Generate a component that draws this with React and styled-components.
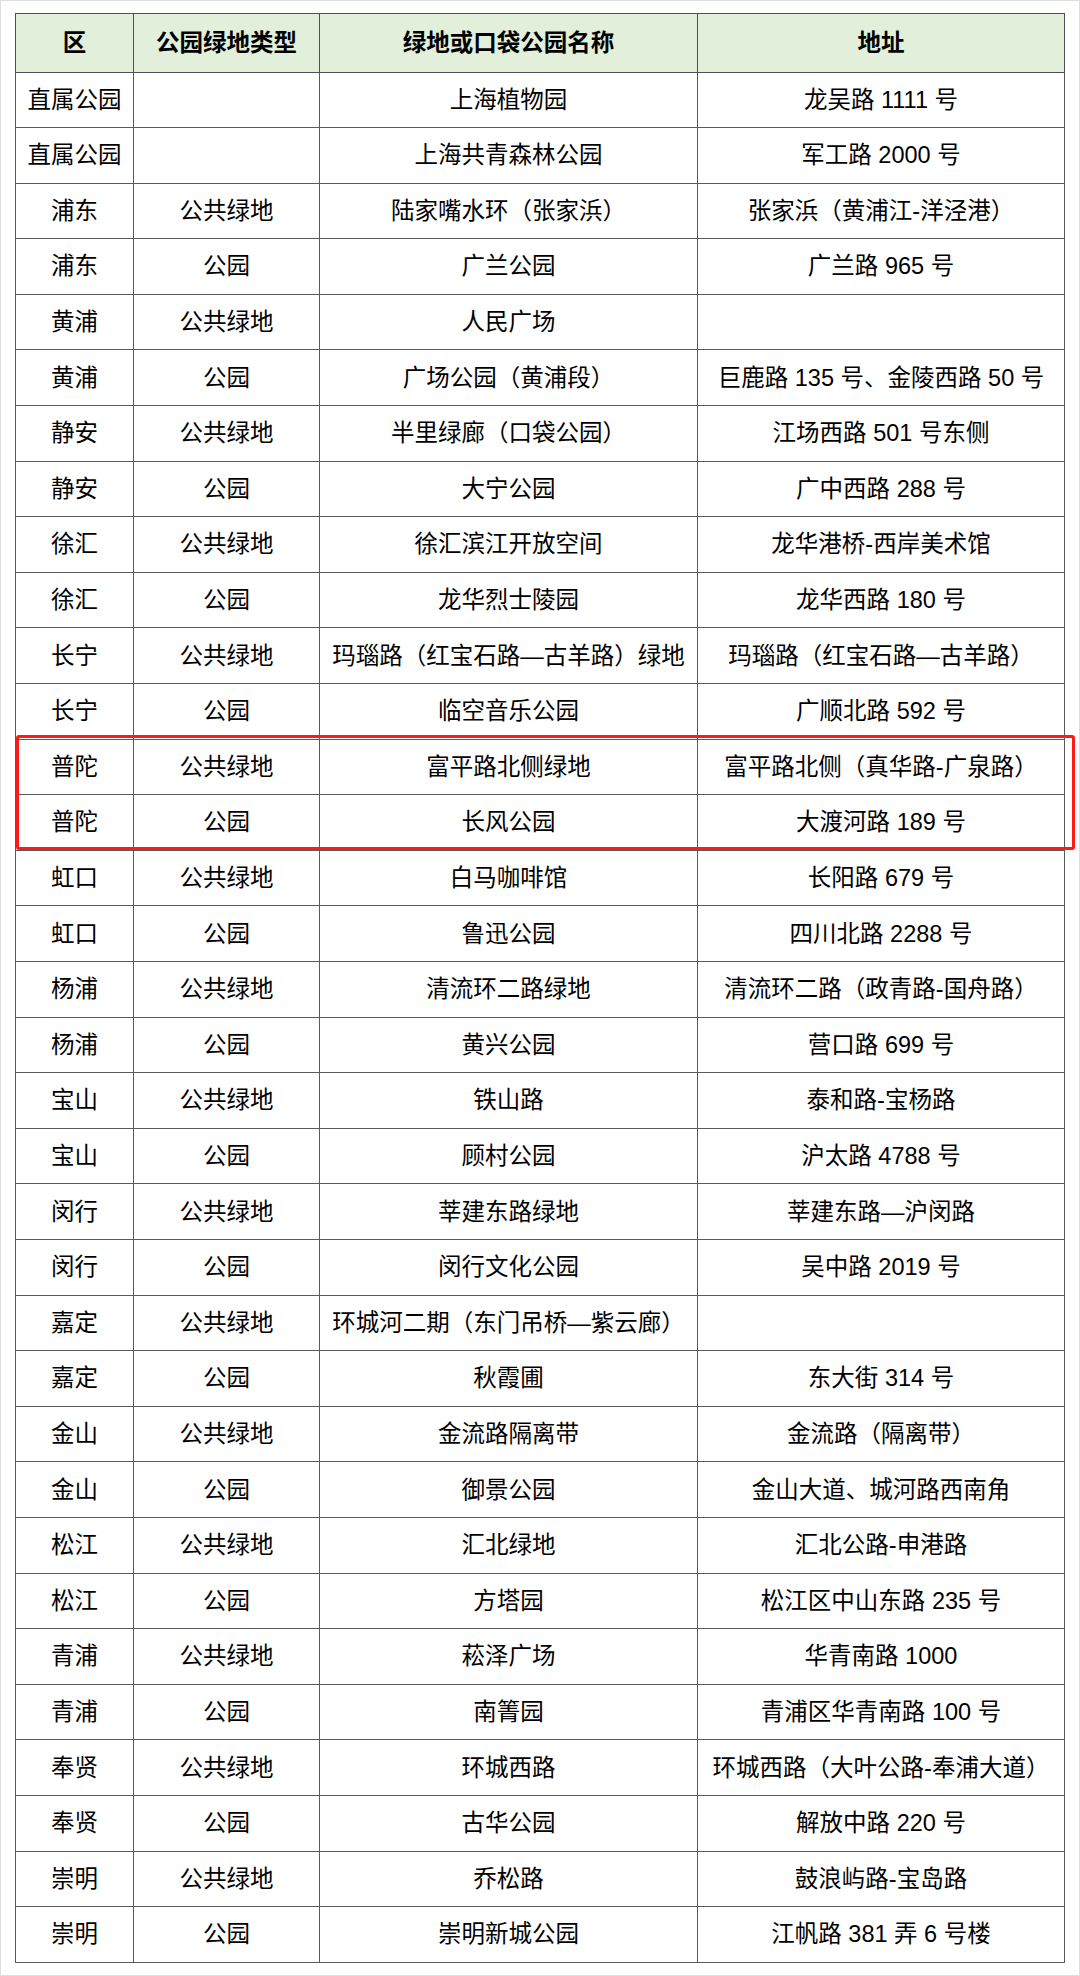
import React from 'react';
import styled, { createGlobalStyle } from 'styled-components';

const GlobalStyle = createGlobalStyle`
  html, body {
    margin: 0;
    padding: 0;
    background: #ffffff;
  }
`;

const rows = [
  ['直属公园', '', '上海植物园', '龙吴路 1111 号'],
  ['直属公园', '', '上海共青森林公园', '军工路 2000 号'],
  ['浦东', '公共绿地', '陆家嘴水环（张家浜）', '张家浜（黄浦江-洋泾港）'],
  ['浦东', '公园', '广兰公园', '广兰路 965 号'],
  ['黄浦', '公共绿地', '人民广场', ''],
  ['黄浦', '公园', '广场公园（黄浦段）', '巨鹿路 135 号、金陵西路 50 号'],
  ['静安', '公共绿地', '半里绿廊（口袋公园）', '江场西路 501 号东侧'],
  ['静安', '公园', '大宁公园', '广中西路 288 号'],
  ['徐汇', '公共绿地', '徐汇滨江开放空间', '龙华港桥-西岸美术馆'],
  ['徐汇', '公园', '龙华烈士陵园', '龙华西路 180 号'],
  ['长宁', '公共绿地', '玛瑙路（红宝石路—古羊路）绿地', '玛瑙路（红宝石路—古羊路）'],
  ['长宁', '公园', '临空音乐公园', '广顺北路 592 号'],
  ['普陀', '公共绿地', '富平路北侧绿地', '富平路北侧（真华路-广泉路）'],
  ['普陀', '公园', '长风公园', '大渡河路 189 号'],
  ['虹口', '公共绿地', '白马咖啡馆', '长阳路 679 号'],
  ['虹口', '公园', '鲁迅公园', '四川北路 2288 号'],
  ['杨浦', '公共绿地', '清流环二路绿地', '清流环二路（政青路-国舟路）'],
  ['杨浦', '公园', '黄兴公园', '营口路 699 号'],
  ['宝山', '公共绿地', '铁山路', '泰和路-宝杨路'],
  ['宝山', '公园', '顾村公园', '沪太路 4788 号'],
  ['闵行', '公共绿地', '莘建东路绿地', '莘建东路—沪闵路'],
  ['闵行', '公园', '闵行文化公园', '吴中路 2019 号'],
  ['嘉定', '公共绿地', '环城河二期（东门吊桥—紫云廊）', ''],
  ['嘉定', '公园', '秋霞圃', '东大街 314 号'],
  ['金山', '公共绿地', '金流路隔离带', '金流路（隔离带）'],
  ['金山', '公园', '御景公园', '金山大道、城河路西南角'],
  ['松江', '公共绿地', '汇北绿地', '汇北公路-申港路'],
  ['松江', '公园', '方塔园', '松江区中山东路 235 号'],
  ['青浦', '公共绿地', '菘泽广场', '华青南路 1000'],
  ['青浦', '公园', '南箐园', '青浦区华青南路 100 号'],
  ['奉贤', '公共绿地', '环城西路', '环城西路（大叶公路-奉浦大道）'],
  ['奉贤', '公园', '古华公园', '解放中路 220 号'],
  ['崇明', '公共绿地', '乔松路', '鼓浪屿路-宝岛路'],
  ['崇明', '公园', '崇明新城公园', '江帆路 381 弄 6 号楼'],
];

const columns = ['区', '公园绿地类型', '绿地或口袋公园名称', '地址'];
const widths = [118, 186, 378, 367];

const Frame = styled.div`
  box-sizing: border-box;
  width: 1080px;
  height: 1976px;
  border: 1px solid #dedede;
  padding: 12px 0 0 14px;
  background: #ffffff;
`;

const TableWrap = styled.div`
  position: relative;
  width: 1049px;
`;

const Sheet = styled.table`
  border-collapse: collapse;
  table-layout: fixed;
  width: 1049px;
  font-family: "Liberation Sans", "Noto Sans CJK SC", sans-serif;
  font-size: 23.5px;
  line-height: 1.2;
  color: #000000;
`;

const HeadCell = styled.th`
  height: 57.5px;
  padding: 0;
  border: 1px solid #505050;
  background: #e2efda;
  font-weight: 700;
  text-align: center;
  vertical-align: middle;
`;

const Cell = styled.td`
  height: 54.6px;
  padding: 0;
  border: 1px solid #5a5a5a;
  text-align: center;
  vertical-align: middle;
  white-space: nowrap;
  font-weight: 400;
`;

const Highlight = styled.div`
  position: absolute;
  top: ${(p) => p.$top}px;
  left: 1px;
  width: 1059px;
  height: ${(p) => p.$height}px;
  box-sizing: border-box;
  border: 3px solid #ff1a1a;
  border-radius: 3px;
  pointer-events: none;
`;

export default function App() {
  return (
    <>
      <GlobalStyle />
      <Frame>
        <TableWrap>
          <Sheet>
            <colgroup>
              {widths.map((w, i) => (
                <col key={i} style={{ width: w }} />
              ))}
            </colgroup>
            <thead>
              <tr>
                {columns.map((c) => (
                  <HeadCell key={c}>{c}</HeadCell>
                ))}
              </tr>
            </thead>
            <tbody>
              {rows.map((r, i) => (
                <tr key={i}>
                  {r.map((v, j) => (
                    <Cell key={j}>{v}</Cell>
                  ))}
                </tr>
              ))}
            </tbody>
          </Sheet>
          {/* 普陀 rows are boxed in red */}
          <Highlight $top={722} $height={115} />
        </TableWrap>
      </Frame>
    </>
  );
}
